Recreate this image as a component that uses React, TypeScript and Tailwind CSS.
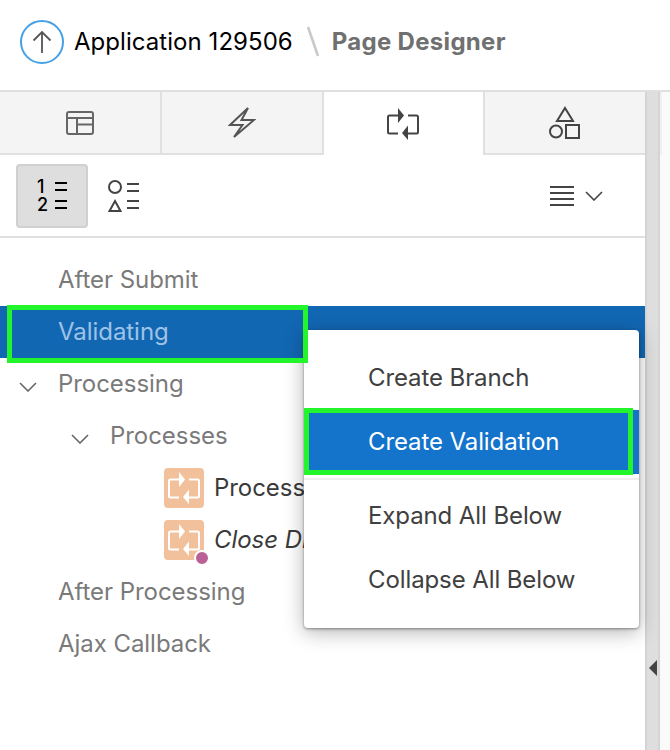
import { Fragment } from 'react';

const font = { fontFamily: 'Inter, "Noto Sans", sans-serif' };

function Caret({ className }: { className: string }) {
  return (
    <svg className={className} width="18" height="10" viewBox="0 0 18 10" fill="none" stroke="currentColor" strokeWidth="1.6">
      <path d="M1 1 L9 9 L17 1" />
    </svg>
  );
}

function ProcessGlyph({ color }: { color: string }) {
  return (
    <svg width="32" height="32" viewBox="0 0 32 32" fill="none">
      <path d="M11 7.5 H2.5 Q1 7.5 1 9 V24 Q1 25.5 2.5 25.5 H11" stroke={color} strokeWidth="2" />
      <path d="M11 0 L17 7.5 L11 15 Z" fill={color} />
      <path d="M21 7.5 H29.5 Q31 7.5 31 9 V24 Q31 25.5 29.5 25.5 H21" stroke={color} strokeWidth="2" />
      <path d="M21 17.5 L15 25 L21 32 Z" fill={color} />
    </svg>
  );
}

function TreeIcon({ dot }: { dot?: boolean }) {
  return (
    <div className="relative flex h-10 w-10 items-center justify-center rounded bg-[#f2c09a]">
      <ProcessGlyph color="#ffffff" />
      {dot && <span className="absolute left-[30px] top-[30px] h-4 w-4 rounded-full border-2 border-white bg-[#bb5f97]" />}
    </div>
  );
}

function Tab({ active, last, children }: { active?: boolean; last?: boolean; children: React.ReactNode }) {
  return (
    <div className={`flex h-[63px] flex-1 items-center justify-center ${active ? 'bg-white' : 'border-b-2 border-[#e0e0e0] bg-[#f4f4f4]'} ${!last ? 'border-r-2 border-[#e0e0e0]' : ''}`}>
      {children}
    </div>
  );
}

const menuItems = ['Create Branch', 'Create Validation', '-', 'Expand All Below', 'Collapse All Below'];

export default function App() {
  return (
    <div className="relative flex h-[750px] w-[670px] flex-col overflow-hidden bg-white" style={font}>
      <header className="flex h-[90px] items-center pb-[6px] pl-5">
        <div className="flex h-11 w-11 items-center justify-center rounded-full border-2 border-[#45a0e6]">
          <svg width="22" height="24" viewBox="0 0 22 24" fill="none" stroke="#555" strokeWidth="1.8">
            <path d="M11 23 V2 M2.5 10.5 L11 2 L19.5 10.5" />
          </svg>
        </div>
        <span className="ml-[10px] text-[24px] tracking-[0.05px] text-black">Application 129506</span>
        <svg className="ml-[13px]" width="14" height="32" viewBox="0 0 14 32" stroke="#c9c9c9" strokeWidth="2.6">
          <path d="M2 1 L12 30" />
        </svg>
        <span className="ml-[12px] text-[24px] font-bold tracking-[0.3px] text-[#707070]">Page Designer</span>
      </header>

      <div className="flex flex-1 border-t-2 border-[#e0e0e0]">
        <div className="flex w-[645px] flex-col">
          <div className="flex">
            <Tab>
              <svg width="30" height="26" viewBox="0 0 30 26" fill="none" stroke="#666" strokeWidth="2">
                <rect x="2" y="2" width="26" height="22" rx="2" />
                <path d="M2 8 H28 M12 8 V24 M12 14.5 H28" />
              </svg>
            </Tab>
            <Tab>
              <svg width="28" height="33" viewBox="0 0 28 33" fill="none" stroke="#555" strokeWidth="2">
                <path d="M20 2 L2 19 H14.5 L6 31 L26 14 H13.5 Z" />
              </svg>
            </Tab>
            <Tab active>
              <ProcessGlyph color="#444444" />
            </Tab>
            <Tab last>
              <svg width="34" height="34" viewBox="0 0 34 34" fill="none" stroke="#444" strokeWidth="2">
                <path d="M17 2 L25 15 H9 Z" />
                <circle cx="8" cy="25.5" r="6" />
                <rect x="18" y="19" width="13" height="13" />
              </svg>
            </Tab>
          </div>

          <div className="flex h-[83px] items-center justify-between border-b-2 border-[#e0e0e0] pl-4 pr-[42px]">
            <div className="flex items-center gap-[18px]">
              <div className="flex h-16 w-[72px] flex-col items-center justify-center rounded border-2 border-[#d0d0d0] bg-[#dedede] text-[18px] font-medium leading-[18px] text-black">
                <div className="flex items-center">
                  <span className="w-[18px]">1</span><span className="h-[9px] w-[12px] border-y-2 border-black" />
                </div>
                <div className="flex items-center">
                  <span className="w-[18px]">2</span><span className="h-[9px] w-[12px] border-y-2 border-black" />
                </div>
              </div>
              <svg width="34" height="36" viewBox="0 0 34 36" fill="none" stroke="#444" strokeWidth="2">
                <circle cx="9" cy="9" r="6" />
                <path d="M9 23 L14.5 33 H3.5 Z" />
                <path d="M21 6 H33 M21 13 H33 M21 23 H33 M21 30 H33" />
              </svg>
            </div>
            <div className="flex items-center gap-[11px]">
              <svg width="24" height="22" viewBox="0 0 24 22" stroke="#444" strokeWidth="2">
                <path d="M0 2 H24 M0 8 H24 M0 14 H24 M0 20 H24" />
              </svg>
              <Caret className="text-[#444]" />
            </div>
          </div>

          <div className="pt-[16px] text-[24px] tracking-[-0.05px] text-[#7a7a7a]">
            <div className="flex h-[52px] items-center pl-[58px]">After Submit</div>
            <div className="flex h-[52px] items-center bg-[#1267b3] pl-[58px] text-[#9fc3e6]">Validating</div>
            <div className="relative flex h-[52px] items-center pl-[58px]">
              <Caret className="absolute left-[19px] top-[24px] text-[#666]" />
              Processing
            </div>
            <div className="relative flex h-[52px] items-center pl-[110px]">
              <Caret className="absolute left-[71px] top-[24px] text-[#666]" />
              Processes
            </div>
            <div className="flex h-[52px] items-center gap-[10px] pl-[164px] text-[#3a3a3a]">
              <TreeIcon />
              <span>Process Form</span>
            </div>
            <div className="flex h-[52px] items-center gap-[10px] pl-[164px] text-[#3a3a3a]">
              <TreeIcon dot />
              <span className="italic">Close Dialog</span>
            </div>
            <div className="flex h-[52px] items-center pl-[58px]">After Processing</div>
            <div className="flex h-[52px] items-center pl-[58px]">Ajax Callback</div>
          </div>
        </div>

        <div className="flex w-[15px] justify-center border-x-2 border-[#d4d4d4] bg-[#dedede] pt-[568px]">
          <span className="h-0 w-0 border-y-[8px] border-r-[8px] border-y-transparent border-r-[#444]" />
        </div>
        <div className="flex-1 bg-[#fafafa]">
          <div className="h-[63px] w-[2px] bg-[#f0f0f0]" />
        </div>
      </div>

      {/* context menu */}
      <div className="absolute left-[304px] top-[330px] w-[335px] rounded bg-white py-4 text-[24px] tracking-[-0.1px] text-[#404040] shadow-[0_4px_20px_rgba(0,0,0,0.3),0_1px_3px_rgba(0,0,0,0.4)]">
        {menuItems.map((item, i) => (
          <Fragment key={i}>
            {item === '-' ? (
              <div className="flex h-[10px] items-center"><div className="h-[2px] w-full bg-[#eeeeee]" /></div>
            ) : (
              <div className={`flex h-16 items-center pl-[64px] ${i === 1 ? 'bg-[#1473ca] text-white' : ''}`}>{item}</div>
            )}
          </Fragment>
        ))}
      </div>

      {/* green annotation boxes */}
      <div className="absolute left-[7px] top-[305px] h-[58px] w-[301px] border-[5px] border-[#23f52d]" />
      <div className="absolute left-[304px] top-[408px] h-[67px] w-[329px] border-[5px] border-[#23f52d]" />
    </div>
  );
}
